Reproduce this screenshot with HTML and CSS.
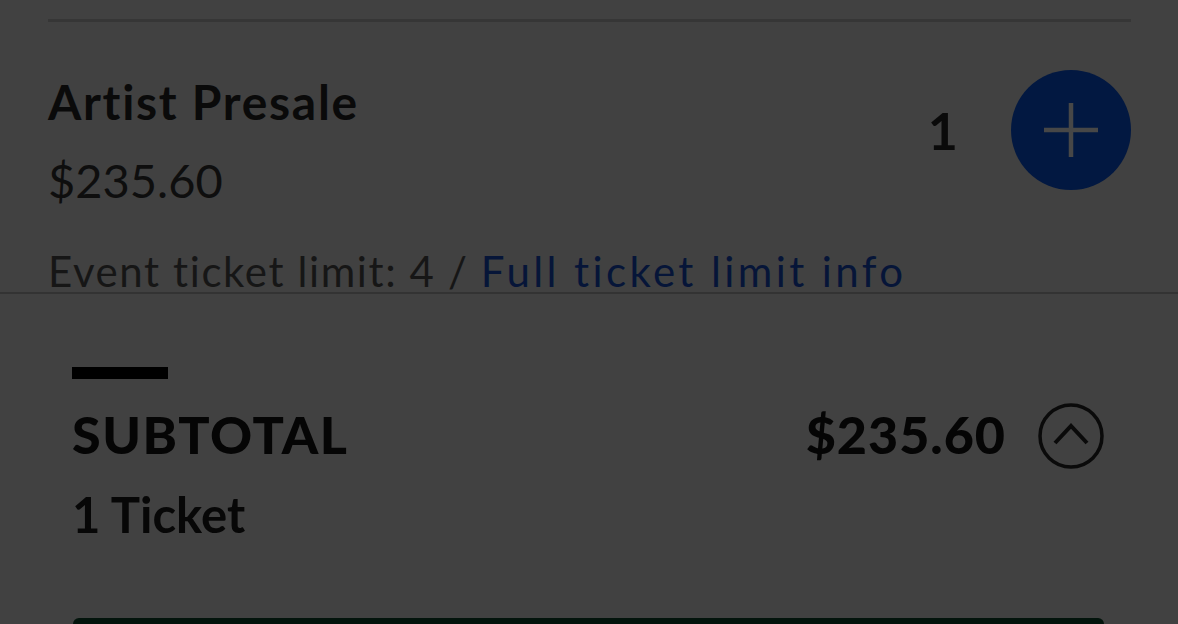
FILE: index.html
```html
<!DOCTYPE html>
<html lang="en-US">
<head>
	<meta charset="utf-8">
	<meta name="viewport" content="width=device-width, initial-scale=1.0">
	<link rel="stylesheet" href="styles.css">
</head>
<body>

	<div class="tickets">
		<div class="ticket">
			<div class="ticket-info">
				<h2 class="ticket-name">Artist Presale</h2>
				<p class="ticket-price">$235.60</p>
			</div>
			<div class="ticket-qty">
				<span class="qty-count">1</span>
				<button class="qty-add" type="button" aria-label="Add ticket">
					<svg width="56" height="56" viewBox="0 0 56 56"><path d="M28 1v54M1 28h54" stroke="currentColor" stroke-width="4.5" fill="none"/></svg>
				</button>
			</div>
		</div>
		<p class="ticket-limit">Event ticket limit: 4 / <a href="#">Full ticket limit info</a></p>
	</div>

	<div class="summary">
		<div class="grabber"></div>
		<div class="summary-row">
			<div>
				<h3 class="summary-label">SUBTOTAL</h3>
				<p class="summary-count">1 Ticket</p>
			</div>
			<div class="summary-total">
				<span class="total-amount">$235.60</span>
				<button class="toggle" type="button" aria-label="Show details">
					<svg width="66" height="66" viewBox="0 0 66 66"><circle cx="33" cy="33" r="31" stroke="currentColor" stroke-width="3.5" fill="none"/><path d="M17 40l16-17 16 17" stroke="currentColor" stroke-width="4" fill="none"/></svg>
				</button>
			</div>
		</div>
		<div class="checkout"></div>
	</div>

</body>
</html>
```

FILE: styles.css
```css
html, body {
	margin: 0;
	background: #414141;
	font-family: Lato, "Noto Sans", sans-serif;
	overflow: hidden;
}
p, h2, h3 {
	margin: 0;
	font-weight: normal;
}
button {
	border: 0;
	padding: 0;
	background: none;
	font: inherit;
}

.tickets {
	margin: 19px 47px 0 48px;
	border-top: 3px solid #363636;
}
.ticket {
	display: flex;
	justify-content: space-between;
	align-items: flex-start;
	padding-top: 50px;
}
.ticket-name {
	font-size: 48px;
	font-weight: bold;
	letter-spacing: 1.7px;
	line-height: 60px;
	color: #0a0a0a;
}
.ticket-price {
	font-size: 47px;
	line-height: 60px;
	margin-top: 18px;
	color: #0e0e0e;
}
.ticket-qty {
	display: flex;
	align-items: center;
	gap: 53px;
	margin-top: -2px;
}
.qty-count {
	font-size: 52px;
	font-weight: bold;
	color: #0a0a0a;
}
.qty-add {
	width: 120px;
	height: 120px;
	border-radius: 50%;
	background: #021841;
	color: #474747;
	display: flex;
	align-items: center;
	justify-content: center;
}
.qty-add svg { display: block; }
.ticket-limit {
	font-size: 42px;
	letter-spacing: 1.6px;
	line-height: 50px;
	margin-top: 36px;
	color: #161616;
}
.ticket-limit a {
	color: #061538;
	letter-spacing: 3.4px;
	text-decoration: none;
}

.summary {
	border-top: 2px solid #333;
	margin-top: -4px;
	padding: 73px 74px 0 72px;
}
.grabber {
	width: 96px;
	height: 12px;
	background: #000;
}
.summary-row {
	display: flex;
	justify-content: space-between;
	align-items: flex-start;
	margin-top: 23px;
}
.summary-label {
	font-size: 52px;
	font-weight: 900;
	letter-spacing: 1.5px;
	line-height: 64px;
	color: #050505;
}
.summary-count {
	font-size: 49px;
	font-weight: bold;
	line-height: 60px;
	margin-top: 18px;
	color: #070707;
}
.summary-total {
	display: flex;
	align-items: center;
	gap: 32px;
	height: 64px;
}
.total-amount {
	font-size: 52px;
	font-weight: 900;
	letter-spacing: 1px;
	line-height: 64px;
	color: #050505;
}
.toggle {
	color: #0a0a0a;
	margin-top: 3px;
}
.toggle svg { display: block; }
.checkout {
	margin: 74px 0 0 1px;
	height: 6px;
	border-radius: 8px 8px 0 0;
	background: #03140c;
}
```
